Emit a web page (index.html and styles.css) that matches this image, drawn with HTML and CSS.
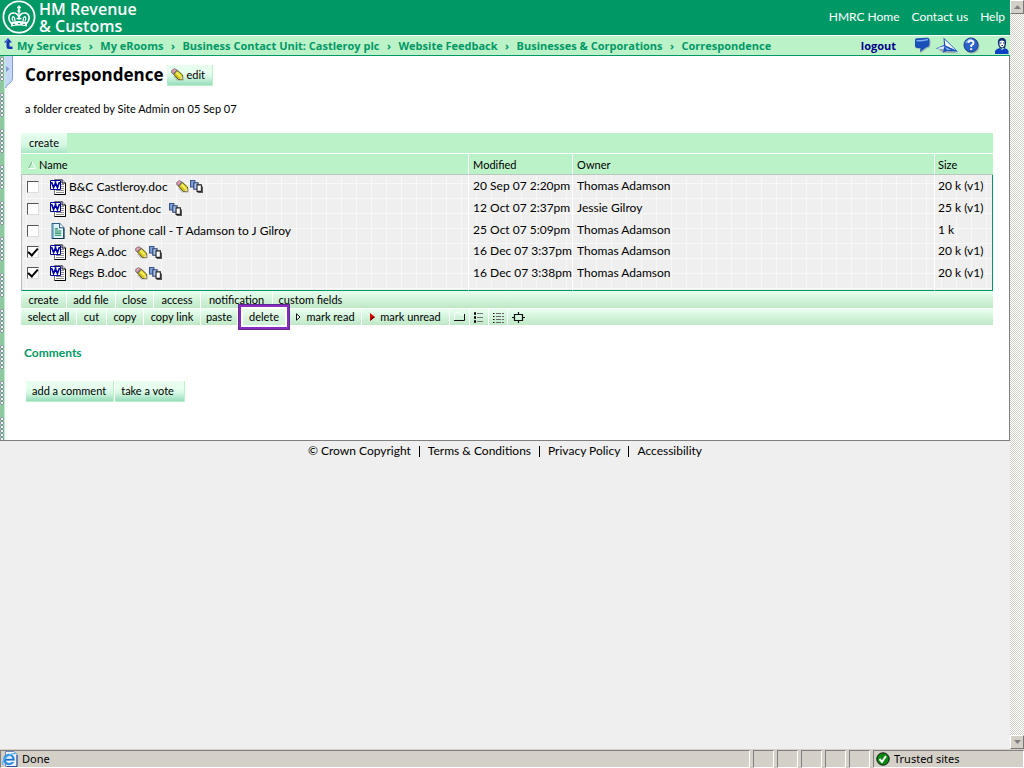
FILE: index.html
```html
<!DOCTYPE html>
<html lang="en">
<head>
<meta charset="utf-8">
<title>Correspondence</title>
<link rel="stylesheet" href="styles.css">
</head>
<body>
<svg class="defs" aria-hidden="true">
  <symbol id="pencil" viewBox="0 0 13 13">
    <path d="M2 8L6 12.500H12.500L12.500 8Z" fill="#777" opacity=".4"/>
    <path d="M.7 2.500L3.500 .7L6.500 2.500L3 6.300L.9 5Z" fill="#e3a3b4" stroke="#6d5360" stroke-width=".8"/>
    <path d="M2.500 6L6.300 2.200L11.500 7L11.700 11.600L7.500 11.500Z" fill="#d6c61c" stroke="#4b4610" stroke-width=".9"/>
    <path d="M5.500 4.500L9.800 8.800" stroke="#f7ef60" stroke-width="2"/>
    <path d="M2.500 6L6.300 2.200" stroke="#777" stroke-width="1.400"/>
    <path d="M8.400 11.300L11.300 8L11.700 11.600Z" fill="#eee0a8"/>
  </symbol>
  <symbol id="versions" viewBox="0 0 12 12">
    <path d="M.5 .5H4.500V6.500H.5Z" fill="#7ea2dc" stroke="#3a5288"/>
    <path d="M3.500 2.500H7.500V8.500H3.500Z" fill="#a9c4ee" stroke="#2c3f6c"/>
    <path d="M6.500 4.500H10.500V10.500H6.500Z" fill="#fff" stroke="#222"/>
    <path d="M11.500 6V11.500H7" fill="none" stroke="#555"/>
  </symbol>
  <symbol id="word" viewBox="0 0 16 16">
    <path d="M4.500 .5H12L15.500 4V15.500H4.500Z" fill="#fff" stroke="#777"/>
    <path d="M12 .5V4H15.500V15.500H4.500" fill="none" stroke="#000"/>
    <path d="M11 5.500H14M11 7.500H14M6 11.500H14M6 13.500H14M11 9.500H14" stroke="#8f8f8f"/>
    <path d="M.5 1.500H10.500V10.500H.5Z" fill="#fff" stroke="#00009c"/>
    <path d="M1.500 3L3.600 8.500L5.500 4L7.400 8.500L9.500 3M4.600 3H6.400" fill="none" stroke="#0000a8" stroke-width="1.700"/>
  </symbol>
  <symbol id="note" viewBox="0 0 12 15">
    <path d="M.5 .5H7.500L11.500 4.500V14.500H.5Z" fill="#dff3f8" stroke="#2a5e86"/>
    <path d="M1.500 1V14" stroke="#5fa6c8"/>
    <path d="M7.500 .5V4.500H11.500" fill="#fff" stroke="#2a5e86"/>
    <path d="M3 5.500H6M3 7.500H9M3 9.500H9M3 11.500H9" stroke="#11854c"/>
    <path d="M11.500 5V14.500H1" fill="none" stroke="#123450"/>
  </symbol>
</svg>

<div class="browser">
  <div class="page">
    <header class="masthead">
      <div class="logo">
        <svg class="crest" viewBox="0 0 34 34" aria-hidden="true">
          <circle cx="17" cy="17" r="15.600" fill="none" stroke="#fff" stroke-width="1.800"/>
          <path d="M17 5.500V10M15 7.500H19" stroke="#fff" stroke-width="1.500"/>
          <circle cx="17" cy="11" r="1.600" fill="#fff"/>
          <path d="M9 23C5 18 7 12.500 12 13C14.500 13 16 15 17 17C18 15 19.500 13 22 13C27 12.500 29 18 25 23Z" fill="none" stroke="#fff" stroke-width="1.600"/>
          <path d="M17 12V20M11 21C9 18 11 15 12.500 18L13 21M23 21C25 18 23 15 21.500 18L21 21M14.500 18.500H19.500" fill="none" stroke="#fff" stroke-width="1.300"/>
          <path d="M9 22Q17 20 25 22V26.500Q17 24.500 9 26.500Z" fill="#fff"/>
          <path d="M11 24.400H13M16 23.600H18M21 24.400H23" stroke="#096"/>
        </svg>
        <div class="logo-text">HM Revenue<br>&amp; Customs</div>
      </div>
      <nav class="site-links">
        <a href="#">HMRC Home</a><a href="#">Contact us</a><a href="#">Help</a>
      </nav>
    </header>

    <div class="trail">
      <svg class="up" viewBox="0 0 9 12" aria-hidden="true"><path d="M0 4.500L4 0L8 4.500H5.500V8.500H8.500V11H5Q2.500 11 2.500 8.500V4.500Z" fill="#1737b0"/><path d="M4 1.500L2 4" stroke="#6d8ff0"/></svg>
      <nav class="crumbs">
        <a href="#">My Services</a><i>›</i><a href="#">My eRooms</a><i>›</i><a href="#">Business Contact Unit: Castleroy plc</a><i>›</i><a href="#">Website Feedback</a><i>›</i><a href="#">Businesses &amp; Corporations</a><i>›</i><a href="#">Correspondence</a>
      </nav>
      <a class="logout" href="#">logout</a>
      <div class="trail-icons">
        <svg width="17" height="17" viewBox="0 0 17 17" aria-hidden="true"><path d="M2 4Q2 2 4 2L14 1.500Q16.500 1.500 16.500 4V8Q16.500 11 13 11.500L6 16.500L7 12H4Q2 12 2 10Z" fill="#889" opacity=".5"/><path d="M1 3Q1 1 3 1.200L13 .7Q15.500 .5 15.500 3V7Q15.500 10 12 10.500L6 15L6.500 11H3Q1 11 1 9Z" fill="#1b4fb8"/><path d="M2.500 3.500Q6 4.500 14 2.500" stroke="#7eaaf0" stroke-width="1.500" fill="none"/></svg>
        <svg width="24" height="17" viewBox="0 0 24 17" aria-hidden="true"><path d="M4 13L10 12L24 16.500L8 16Z" fill="#889" opacity=".6"/><path d="M8.500 .5L23 14.800L12 14L8 15.500L8.500 13L.5 11.500L9 8Z" fill="#1d52bc"/><path d="M9.500 2.500L20.500 13L10.500 8.500Z" fill="#fff"/><path d="M1.500 11.300L9.500 9L8.500 12.800Z" fill="#dfeaff"/><path d="M10 10L16 13L12 12.800Z" fill="#a9c8f5"/></svg>
        <svg width="17" height="17" viewBox="0 0 17 17" aria-hidden="true"><circle cx="9" cy="9" r="7.500" fill="#778" opacity=".5"/><circle cx="8" cy="8" r="7" fill="#2b62c8" stroke="#123a8c"/><path d="M3 6Q5 2 9 2.500" stroke="#8db4f2" stroke-width="1.500" fill="none"/><path d="M5.500 6Q5.500 3.800 8 3.800Q10.500 3.800 10.500 6Q10.500 7.300 8.200 8.500V10M8.200 11.200V13" stroke="#fff" stroke-width="1.900" fill="none"/></svg>
        <svg class="person" width="14" height="17" viewBox="0 0 14 17" aria-hidden="true"><path d="M0 17V14Q1 12 4.500 11L7 13L9.500 11Q13 12 13.500 14V17Z" fill="#0b43c4"/><path d="M3 7Q2 1 7 .7Q12 1 11 7L10 11H8L6 12L4 10Z" fill="#0d2b73"/><path d="M4.500 4.500Q7 2.500 9.500 4.500V8Q8.500 10.500 7 10.500Q5 10 4.500 8Z" fill="#fff"/><path d="M5 6H6.500M8 6H9.500M6.500 8.500H8" stroke="#0d2b73"/></svg>
      </div>
    </div>

    <main class="room">
      <div class="rail"></div>
      <svg class="drawer" viewBox="0 0 9 32" aria-hidden="true"><path d="M0 0H7.500V22Q7.500 25 5 27Q1 29 .5 31.500H0Z" fill="#c6d8fa"/><path d="M7.500 0V22Q7.500 25 5 27Q1 29 .5 32" fill="none" stroke="#7f9dd0"/><path d="M1 10L4.500 13L1 16Z" fill="#7f9dd0"/></svg>
      <div class="content">
        <div class="heading"><h1>Correspondence</h1><button class="btn edit"><svg width="13" height="13"><use href="#pencil"/></svg>edit</button></div>
        <p class="about">a folder created by Site Admin on 05 Sep 07</p>

        <section class="files">
          <div class="create-bar"><button>create</button></div>
          <table>
            <colgroup><col class="c-name"><col class="c-mod"><col><col class="c-size"></colgroup>
            <thead><tr>
              <th><svg class="sort" viewBox="0 0 8 8" aria-hidden="true"><path d="M.5 7.500L4 .5" stroke="#8fae98"/><path d="M4 .5L7.500 7.500H.5" fill="none" stroke="#fff"/></svg>Name</th>
              <th>Modified</th><th>Owner</th><th>Size</th></tr></thead>
            <tbody>
              <tr><td><label><input type="checkbox"><svg class="doc"><use href="#word"/></svg>B&amp;C Castleroy.doc</label><svg class="mark pen"><use href="#pencil"/></svg><svg class="mark"><use href="#versions"/></svg></td><td>20 Sep 07 2:20pm</td><td>Thomas Adamson</td><td>20 k (v1)</td></tr>
              <tr><td><label><input type="checkbox"><svg class="doc"><use href="#word"/></svg>B&amp;C Content.doc</label><svg class="mark pen"><use href="#versions"/></svg></td><td>12 Oct 07 2:37pm</td><td>Jessie Gilroy</td><td>25 k (v1)</td></tr>
              <tr class="note"><td><label><input type="checkbox"><svg class="doc"><use href="#note"/></svg>Note of phone call - T Adamson to J Gilroy</label></td><td>25 Oct 07 5:09pm</td><td>Thomas Adamson</td><td>1 k</td></tr>
              <tr><td><label><input type="checkbox" checked><svg class="doc"><use href="#word"/></svg>Regs A.doc</label><svg class="mark pen"><use href="#pencil"/></svg><svg class="mark"><use href="#versions"/></svg></td><td>16 Dec 07 3:37pm</td><td>Thomas Adamson</td><td>20 k (v1)</td></tr>
              <tr><td><label><input type="checkbox" checked><svg class="doc"><use href="#word"/></svg>Regs B.doc</label><svg class="mark pen"><use href="#pencil"/></svg><svg class="mark"><use href="#versions"/></svg></td><td>16 Dec 07 3:38pm</td><td>Thomas Adamson</td><td>20 k (v1)</td></tr>
            </tbody>
          </table>
          <div class="tools first">
            <button>create</button><button>add file</button><button>close</button><button>access</button><button>notification</button><button>custom fields</button>
          </div>
          <div class="tools second">
            <button>select all</button><button>cut</button><button>copy</button><button>copy link</button><button>paste</button><button class="delete">delete</button><button><svg width="5" height="8" viewBox="0 0 5 8"><path d="M.5 .8L4 4L.5 7.200Z" fill="#fff" stroke="#111"/></svg>mark read</button><button><svg width="5" height="8" viewBox="0 0 5 8"><path d="M0 0L5 4L0 8Z" fill="#e00000"/><path d="M0 8L5 4H2Z" fill="#600"/></svg>mark unread</button>
            <button aria-label="Icon view"><svg width="12" height="10" viewBox="0 0 12 10"><path d="M.5 8V2.500L2 .5H5L6.500 2.500H10" fill="none" stroke="#fff"/><path d="M0 8.500H10.500V2" fill="none" stroke="#111"/></svg></button>
            <button aria-label="List view"><svg width="10" height="11" viewBox="0 0 10 11"><path d="M0 1.500H2M0 5.500H2M0 9.500H2" stroke="#000" stroke-width="2.400"/><path d="M3 1.500H9M3 5.500H9M3 9.500H9" stroke="#777"/></svg></button>
            <button aria-label="Detail view"><svg width="11" height="11" viewBox="0 0 11 11"><path d="M0 1.500H1.500M0 4.500H1.500M0 7.500H1.500M0 10.500H1.500" stroke="#000"/><path d="M3 1.500H11M3 4.500H11M3 7.500H11M3 10.500H11" stroke="#666" stroke-dasharray="5 1"/></svg></button>
            <button aria-label="Fit box"><svg width="13" height="11" viewBox="0 0 13 11"><path d="M2.500 2.500H10.500V8.500H2.500ZM6.500 0V2M6.500 9V11M0 5.500H2M11 5.500H13" fill="none" stroke="#111" stroke-width="1.200"/></svg></button>
          </div>
        </section>

        <h2>Comments</h2>
        <div class="actions"><button class="btn">add a comment</button><button class="btn vote">take a vote</button></div>
      </div>
    </main>

    <footer class="legal">
      <span>© Crown Copyright</span><b></b><a href="#">Terms &amp; Conditions</a><b></b><a href="#">Privacy Policy</a><b></b><a href="#">Accessibility</a>
    </footer>
  </div>

  <div class="scrollbar" aria-hidden="true">
    <span><svg width="7" height="4" viewBox="0 0 7 4"><path d="M0 4L3.500 0L7 4Z" fill="#808080"/></svg></span>
    <span><svg width="7" height="4" viewBox="0 0 7 4"><path d="M0 0L3.500 4L7 0Z" fill="#808080"/></svg></span>
  </div>
</div>

<div class="status">
  <div class="pane wide"><svg width="16" height="16" viewBox="0 0 16 16" aria-hidden="true"><path d="M3.500 .5H12L15 3.500V15.500H3.500Z" fill="#edf4ff" stroke="#6d87c0"/><path d="M15 4V15.500H5" fill="none" stroke="#334c90"/><circle cx="7" cy="8.500" r="4.600" fill="none" stroke="#2d8be0" stroke-width="2.400"/><path d="M3 8.700H11.500" stroke="#1c6cc8" stroke-width="1.800"/><path d="M9 11H13V9.700H9Z" fill="#edf4ff"/><path d="M1 14Q-1 10 6 5Q12 1 13.500 3" fill="none" stroke="#5cb2f4" stroke-width="1.300"/></svg>Done</div>
  <div class="pane"></div><div class="pane"></div><div class="pane"></div><div class="pane"></div><div class="pane"></div>
  <div class="pane zone"><svg width="14" height="14" viewBox="0 0 14 14" aria-hidden="true"><circle cx="7" cy="7" r="6.200" fill="#088a10" stroke="#111"/><path d="M3.500 7L6 9.800L10 4" fill="none" stroke="#fff" stroke-width="2"/></svg>Trusted sites</div>
</div>
</body>
</html>
```
FILE: styles.css
```css
* { box-sizing: border-box; }
body {
  margin: 0; min-height: 100vh; display: flex; flex-direction: column;
  font: 12px/16px Lato, "Open Sans", sans-serif; color: #000; background: #efefef;
}
a { color: inherit; text-decoration: none; }
svg { display: block; flex: none; }
button { font: 11px/14px Lato, sans-serif; color: #000; border: 0; margin: 0; cursor: pointer; white-space: nowrap; }
.defs { position: absolute; width: 0; height: 0; }
.browser { flex: 1; display: flex; }
.page { flex: 1; min-width: 0; }

.masthead { display: flex; justify-content: space-between; height: 36px; background: #096; color: #fff; border-bottom: 1px solid #fff; }
.logo { display: flex; padding-left: 2px; gap: 3px; }
.crest { width: 34px; height: 34px; }
.logo-text { font: 600 16px/17px "Open Sans", sans-serif; padding-top: 1px; }
.site-links { display: flex; gap: 12px; padding: 9px 5px 0 0; }

.trail { display: flex; align-items: center; height: 20px; padding: 0 1px 0 4px; background: #bbf2c8; border-bottom: 1px solid #096; font: 700 11px/16px "Open Sans", sans-serif; }
.up { width: 9px; height: 12px; margin: 0 4px 4px 0; }
.crumbs { display: flex; flex: 1; color: #096; white-space: nowrap; }
.crumbs i { font-style: normal; width: 19px; text-align: center; }
.logout { color: #008; }
.trail-icons { display: flex; gap: 4px; padding-left: 18px; }
.person { margin-left: 11px; }

.room { display: flex; background: #fff; border-bottom: 1px solid #808080; border-right: 1px solid #808080; min-height: 385px; }
.rail { width: 5px; border-right: 1px solid #bbf2c8;
  background:
    linear-gradient(transparent 24px, #8fc8a0 24px) 0 1px / 4px 36px,
    radial-gradient(circle at 2px 2px, #f2f2fc 0 1px, #8a929e 1px 2px, transparent 2px) 0 1px / 4px 4px,
    #8fc8a0; }
.drawer { width: 9px; height: 32px; }
.content { flex: 1; min-width: 0; padding: 8px 16px 38px 7px; }
.heading { display: flex; align-items: center; gap: 3px; padding-left: 4px; }
h1 { margin: 0; font: 700 17px/22px "Open Sans", sans-serif; }
.btn { display: flex; align-items: center; height: 21px; padding: 0 7px 0 6px; background: linear-gradient(#e8fff0 35%, #d4f8e2 60%, #98dcbc); border-right: 1px solid #bbf2c8; border-bottom: 1px solid #bbf2c8; }
.edit { gap: 3px; padding: 0 7px 0 4px; }
.vote { padding-right: 10px; }
.about { margin: 15px 0 16px 4px; font-size: 11px; }

.create-bar { height: 20px; background: #bbf2c8; }
.create-bar button { height: 20px; width: 46px; padding: 0; background: linear-gradient(#e8fff0, #d4f8e2 60%, #a8e4c4); }
table { width: 100%; table-layout: fixed; border-collapse: separate; border-spacing: 0; border-top: 1px solid #fff; }
.c-name { width: 46%; } .c-mod { width: 104px; } .c-size { width: 59px; }
th { height: 21px; padding: 1px 0 0 4px; text-align: left; font-weight: 400; font-size: 11px; background: #bbf2c8; border-bottom: 1px solid #b8c8bc; }
th:last-child { padding-left: 3px; }
th + th, td + td { border-left: 1px solid #fff; }
.sort { display: inline-block; width: 8px; height: 8px; margin: 0 3px; }
tbody { background: linear-gradient(90deg, #f8f8f8 1px, transparent 1px) 5px 0 / 15px 15px, linear-gradient(#f8f8f8 1px, transparent 1px) 0 8px / 15px 15px, #efefef; }
td { height: 22px; padding: 0 0 2px 4px; white-space: nowrap; vertical-align: middle; }
td:first-child { padding: 0 0 0 5px; border-left: 1px solid #bbb; display: flex; align-items: center; }
td:last-child { border-right: 1px solid #096; padding-left: 3px; }
tbody tr:first-child td { height: 23px; }
tbody .note td { height: 21px; }
tbody tr:last-child td { height: 28px; padding-bottom: 7px; border-bottom: 1px solid #096; }
label { display: flex; align-items: center; gap: 3px; }
input[type=checkbox] { appearance: none; width: 12px; height: 12px; margin: 0 8px 0 0; background: #fff; border: 1px solid; border-color: #555 #ddd #ddd #555; display: grid; place-items: center; }
input:checked::after { content: ""; width: 8px; height: 4px; border: solid #000; border-width: 0 0 2px 2px; transform: rotate(-48deg); margin-bottom: 3px; }
.doc { width: 16px; height: 16px; }
.mark { width: 13px; height: 13px; margin-left: 1px; }
.pen { margin-left: 8px; }

.tools { display: grid; height: 17px; background: linear-gradient(#e8fff0, #bfe8c6); }
.first { grid-template: 17px / 46px 49px 38px 47px 72px 75px; }
.second { grid-template: 16px / 56px 30px 37px 57px 37px 52px 72px 88px 20px 19px 19px 21px; margin-top: 1px; height: 16px; }
.tools button { display: flex; align-items: center; justify-content: center; gap: 5px; padding: 0; background: none; border-right: 1px solid #fff; }
.tools button:last-child { border: 0; }
.tools .delete { height: 26px; margin-top: -5px; border: 3px solid #8a2cc4; outline: 1px solid #5d2a90; outline-offset: -1px; background: linear-gradient(#effff3, #c8ecd0); box-shadow: inset 0 0 0 2px #fff; }

h2 { margin: 20px 0 0 3px; font: 700 12px/16px Lato, sans-serif; color: #096; }
.actions { display: flex; gap: 1px; padding: 20px 0 0 5px; }

.legal { display: flex; justify-content: center; align-items: center; padding-top: 2px; }
.legal b { width: 1px; height: 11px; margin: 0 8px; background: #000; }

.scrollbar { width: 14px; display: flex; flex-direction: column; justify-content: space-between; background: repeating-conic-gradient(#fff 0 25%, #d4d0c8 0 50%) 0 0 / 2px 2px; }
.scrollbar span { display: grid; place-items: center; height: 14px; background: #d4d0c8; border: 1px solid; border-color: #fff #777 #777 #fff; }

.status { display: flex; gap: 3px; height: 19px; padding-top: 1px; background: #d4d0c8; font: 11px/16px "Noto Sans", sans-serif; }
.pane { display: flex; align-items: center; gap: 4px; width: 21px; border: 1px solid; border-color: #808080 #fff #fff #808080; }
.wide { flex: 1; padding-left: 1px; }
.zone { width: 151px; padding-left: 2px; }
```
